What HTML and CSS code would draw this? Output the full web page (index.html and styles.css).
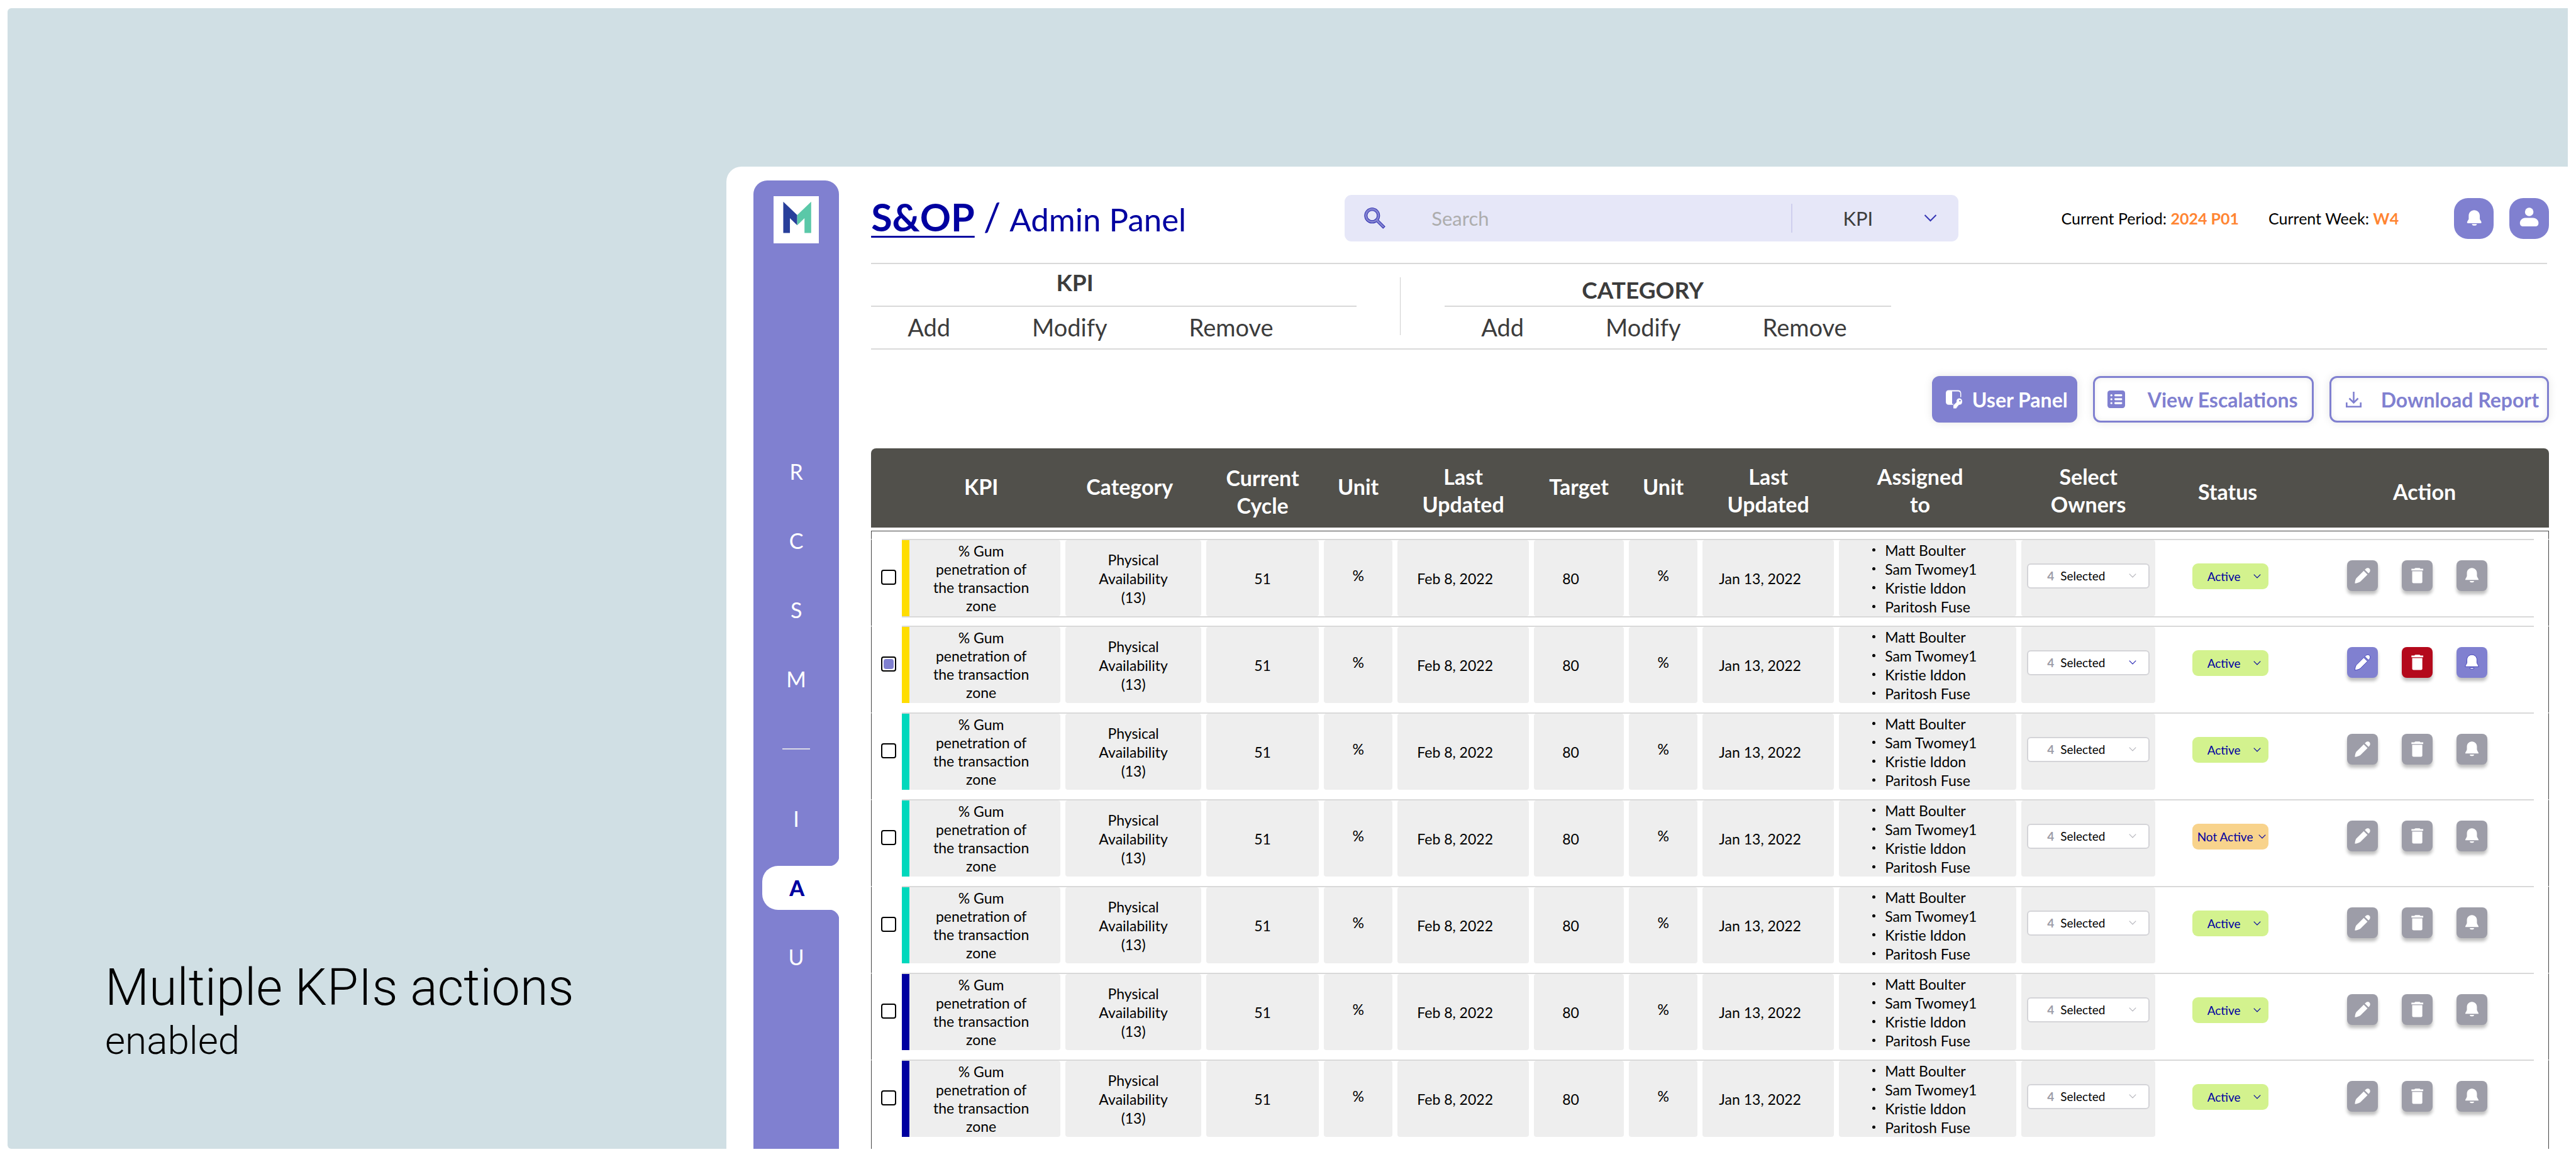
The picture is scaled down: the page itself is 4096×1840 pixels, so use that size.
FILE: index.html
```
<!DOCTYPE html>
<html lang="en">
<head>
<meta charset="utf-8">
<title>S&amp;OP Admin Panel</title>
<link rel="stylesheet" href="styles.css">
</head>
<body>
<svg class="sprite" aria-hidden="true">
  <symbol id="i-pencil" viewBox="0 0 240 240"><path d="M61 180C61 166 66 148 72 140L130 82L159 111L103 167C92 175 76 179 61 180Z"/><path d="M138 74L146 66C154 58 168 58 175 66C182 73 181 87 174 94L167 102Z"/></symbol>
  <symbol id="i-trash" viewBox="0 0 240 240"><path d="M75 66H98Q102 60 108 60H136Q142 60 145 66H167V80H75Z"/><path d="M81 86H160V168Q160 179 149 179H92Q81 179 81 168Z"/></symbol>
  <symbol id="i-bell" viewBox="0 0 240 240"><path d="M120 60C97 60 81 78 81 100V122C81 130 68 142 68 153H172C172 142 159 130 159 122V100C159 78 143 60 120 60Z"/><path d="M103 162H137Q135 173 127 173H113Q105 173 103 162Z"/></symbol>
  <symbol id="i-chevron" viewBox="0 0 20 12"><path d="M1 1L10 10L19 1" fill="none" stroke="currentColor"/></symbol>
</svg>

<div class="stage">
  <aside class="caption">
    <h1 class="caption-title">Multiple KPIs actions</h1>
    <p class="caption-sub">enabled</p>
  </aside>

  <div class="panel">
    <nav class="sidebar" aria-label="Main">
      <a class="logo" href="#home" aria-label="Home">
        <svg viewBox="0 0 354 368"><path fill="#283f9a" d="M76 43L185 148V228L128 172V288H76Z"/><path fill="#5ac8a8" d="M294 43L185 148V228L242 172V288H294Z"/></svg>
      </a>
      <ul class="nav-list">
        <li><a class="nav-link" href="#r">R</a></li>
        <li><a class="nav-link" href="#c">C</a></li>
        <li><a class="nav-link" href="#s">S</a></li>
        <li><a class="nav-link" href="#m">M</a></li>
        <li class="nav-rule" role="separator"></li>
        <li><a class="nav-link" href="#i">I</a></li>
        <li><a class="nav-link nav-link-active" href="#a" aria-current="page">A</a></li>
        <li><a class="nav-link" href="#u">U</a></li>
      </ul>
    </nav>

    <main class="content">
      <header class="topbar">
        <div class="title"><a class="title-root" href="#sop">S&amp;OP</a><span class="title-slash">/</span><span class="title-page">Admin Panel</span></div>
        <form class="search">
          <svg class="search-icon" viewBox="0 0 34 34"><g fill="none" stroke="#1a1aa8" stroke-width="5"><circle cx="12.8" cy="12.8" r="10"/><path d="M20 20L32 32"/></g><g fill="none" stroke="#8080d0" stroke-width="3.4"><circle cx="12.8" cy="12.8" r="10"/><path d="M20 20L31.4 31.4"/></g></svg>
          <input class="search-input" type="search" placeholder="Search" aria-label="Search">
          <div class="search-scope">
            <select class="scope-select" aria-label="Search in"><option>KPI</option><option>Category</option></select>
            <svg class="chevron chevron-large"><use href="#i-chevron"/></svg>
          </div>
        </form>
        <p class="period">Current Period: <strong>2024 P01</strong></p>
        <p class="period">Current Week: <strong>W4</strong></p>
        <div class="top-actions">
          <button class="round-btn" type="button" aria-label="Notifications"><svg viewBox="0 0 307 316"><path d="M157 93C133 93 114 112 114 136V163L102 183Q98 193 107 194H207Q216 193 212 183L200 163V136C200 112 181 93 157 93Z"/><path d="M139 201H177C177 209 171 213 165 213H151C145 213 139 209 139 201Z"/></svg></button>
          <button class="round-btn" type="button" aria-label="Account"><svg viewBox="0 0 307 316"><circle cx="154" cy="107" r="33"/><path d="M122 153H184C208 153 226 171 226 193C226 209 216 219 200 219H108C92 219 82 209 82 193C82 171 100 153 122 153Z"/></svg></button>
        </div>
      </header>

      <section class="subnav">
        <div class="group group-kpi">
          <h2 class="group-title">KPI</h2>
          <div class="group-links"><a href="#kpi-add">Add</a><a href="#kpi-modify">Modify</a><a href="#kpi-remove">Remove</a></div>
        </div>
        <div class="group group-category">
          <h2 class="group-title">CATEGORY</h2>
          <div class="group-links"><a href="#cat-add">Add</a><a href="#cat-modify">Modify</a><a href="#cat-remove">Remove</a></div>
        </div>
      </section>

      <div class="toolbar">
        <button class="tool-btn tool-btn-solid" type="button"><svg class="icon-user-panel" viewBox="0 0 130 146"><path d="M24 0H96Q122 0 122 26V56H115V28Q115 10 97 10H50V109H62Q58 112 57 117H24Q0 117 0 93V24Q0 0 24 0Z"/><path fill-rule="evenodd" d="M107 66C122 66 130 77 130 91C130 108 121 117 109 117L100 118V125L92 128V136L84 139V145H60V121L86 95C83 79 92 66 107 66ZM112 78A6 6 0 1 0 112 91A6 6 0 1 0 112 78Z"/></svg>User Panel</button>
        <button class="tool-btn tool-btn-view" type="button"><svg class="icon-list" viewBox="0 0 135 135"><rect width="135" height="135" rx="20"/><g fill="#fff"><circle cx="30" cy="37" r="8"/><circle cx="30" cy="67" r="8"/><circle cx="30" cy="97" r="8"/><rect x="53" y="29" width="60" height="16" rx="7"/><rect x="53" y="59" width="60" height="16" rx="7"/><rect x="53" y="89" width="60" height="16" rx="7"/></g></svg>View Escalations</button>
        <button class="tool-btn tool-btn-download" type="button"><svg class="icon-download" viewBox="0 0 25 25"><g fill="none" stroke="currentColor" stroke-width="2.6"><path d="M12.5 0V17"/><path d="M5.5 10.5L12.5 17.5L19.5 10.5"/><path d="M1.3 17V23.7H23.7V17"/></g></svg>Download Report</button>
      </div>

      <div class="table-wrap">
        <table class="kpi-table">
          <colgroup><col class="w-check"><col class="w-kpi"><col class="w-category"><col class="w-cycle"><col class="w-unit"><col class="w-date"><col class="w-target"><col class="w-unit"><col class="w-date"><col class="w-assigned"><col class="w-owners"><col class="w-status"><col class="w-action"><col class="w-end"></colgroup>
          <thead>
            <tr>
              <th class="th-first"></th><th>KPI</th><th class="th-category">Category</th><th class="th-low">Current<br>Cycle</th><th>Unit</th><th class="th-two">Last<br>Updated</th><th>Target</th><th>Unit</th><th class="th-two">Last<br>Updated</th><th class="th-two th-assigned">Assigned<br>to</th><th class="th-two">Select<br>Owners</th><th class="th-low">Status</th><th class="th-low th-last" colspan="2">Action</th>
            </tr>
          </thead>
          <tbody>
            <tr class="spacer" aria-hidden="true"><td colspan="14"></td></tr>
            <tr class="row row-ruled">
              <td class="td-check"><input class="check" type="checkbox" aria-label="Select row 1"></td>
              <td><div class="cell stripe yellow">% Gum<br>penetration of<br>the transaction<br>zone</div></td>
              <td><div class="cell category">Physical<br>Availability<br>(13)</div></td>
              <td><div class="cell">51</div></td>
              <td><div class="cell unit">%</div></td>
              <td><div class="cell shift">Feb 8, 2022</div></td>
              <td><div class="cell shift">80</div></td>
              <td><div class="cell unit">%</div></td>
              <td><div class="cell shift">Jan 13, 2022</div></td>
              <td><ul class="cell people"><li>Matt Boulter</li><li>Sam Twomey1</li><li>Kristie Iddon</li><li>Paritosh Fuse</li></ul></td>
              <td><div class="cell owners"><div class="owner-box"><span class="count">4</span><select aria-label="Owners, row 1"><option>Selected</option></select><svg class="chevron"><use href="#i-chevron"/></svg></div></div></td>
              <td class="td-plain"><div class="status"><select aria-label="Status, row 1"><option>Active</option></select><svg class="chevron"><use href="#i-chevron"/></svg></div></td>
              <td class="td-plain"><div class="actions"><button type="button" aria-label="Edit"><svg><use href="#i-pencil"/></svg></button><button type="button" aria-label="Delete"><svg><use href="#i-trash"/></svg></button><button type="button" aria-label="Notify"><svg><use href="#i-bell"/></svg></button></div></td>
              <td class="td-end"></td>
            </tr>
            <tr class="row row-selected">
              <td class="td-check"><input class="check" type="checkbox" checked aria-label="Select row 2"></td>
              <td><div class="cell stripe yellow">% Gum<br>penetration of<br>the transaction<br>zone</div></td>
              <td><div class="cell category">Physical<br>Availability<br>(13)</div></td>
              <td><div class="cell">51</div></td>
              <td><div class="cell unit">%</div></td>
              <td><div class="cell shift">Feb 8, 2022</div></td>
              <td><div class="cell shift">80</div></td>
              <td><div class="cell unit">%</div></td>
              <td><div class="cell shift">Jan 13, 2022</div></td>
              <td><ul class="cell people"><li>Matt Boulter</li><li>Sam Twomey1</li><li>Kristie Iddon</li><li>Paritosh Fuse</li></ul></td>
              <td><div class="cell owners"><div class="owner-box"><span class="count">4</span><select aria-label="Owners, row 2"><option>Selected</option></select><svg class="chevron"><use href="#i-chevron"/></svg></div></div></td>
              <td class="td-plain"><div class="status"><select aria-label="Status, row 2"><option>Active</option></select><svg class="chevron"><use href="#i-chevron"/></svg></div></td>
              <td class="td-plain"><div class="actions"><button type="button" aria-label="Edit"><svg><use href="#i-pencil"/></svg></button><button class="delete" type="button" aria-label="Delete"><svg><use href="#i-trash"/></svg></button><button type="button" aria-label="Notify"><svg><use href="#i-bell"/></svg></button></div></td>
              <td class="td-end"></td>
            </tr>
            <tr class="row">
              <td class="td-check"><input class="check" type="checkbox" aria-label="Select row 3"></td>
              <td><div class="cell stripe teal">% Gum<br>penetration of<br>the transaction<br>zone</div></td>
              <td><div class="cell category">Physical<br>Availability<br>(13)</div></td>
              <td><div class="cell">51</div></td>
              <td><div class="cell unit">%</div></td>
              <td><div class="cell shift">Feb 8, 2022</div></td>
              <td><div class="cell shift">80</div></td>
              <td><div class="cell unit">%</div></td>
              <td><div class="cell shift">Jan 13, 2022</div></td>
              <td><ul class="cell people"><li>Matt Boulter</li><li>Sam Twomey1</li><li>Kristie Iddon</li><li>Paritosh Fuse</li></ul></td>
              <td><div class="cell owners"><div class="owner-box"><span class="count">4</span><select aria-label="Owners, row 3"><option>Selected</option></select><svg class="chevron"><use href="#i-chevron"/></svg></div></div></td>
              <td class="td-plain"><div class="status"><select aria-label="Status, row 3"><option>Active</option></select><svg class="chevron"><use href="#i-chevron"/></svg></div></td>
              <td class="td-plain"><div class="actions"><button type="button" aria-label="Edit"><svg><use href="#i-pencil"/></svg></button><button type="button" aria-label="Delete"><svg><use href="#i-trash"/></svg></button><button type="button" aria-label="Notify"><svg><use href="#i-bell"/></svg></button></div></td>
              <td class="td-end"></td>
            </tr>
            <tr class="row">
              <td class="td-check"><input class="check" type="checkbox" aria-label="Select row 4"></td>
              <td><div class="cell stripe teal">% Gum<br>penetration of<br>the transaction<br>zone</div></td>
              <td><div class="cell category">Physical<br>Availability<br>(13)</div></td>
              <td><div class="cell">51</div></td>
              <td><div class="cell unit">%</div></td>
              <td><div class="cell shift">Feb 8, 2022</div></td>
              <td><div class="cell shift">80</div></td>
              <td><div class="cell unit">%</div></td>
              <td><div class="cell shift">Jan 13, 2022</div></td>
              <td><ul class="cell people"><li>Matt Boulter</li><li>Sam Twomey1</li><li>Kristie Iddon</li><li>Paritosh Fuse</li></ul></td>
              <td><div class="cell owners"><div class="owner-box"><span class="count">4</span><select aria-label="Owners, row 4"><option>Selected</option></select><svg class="chevron"><use href="#i-chevron"/></svg></div></div></td>
              <td class="td-plain"><div class="status status-off"><select aria-label="Status, row 4"><option>Not Active</option></select><svg class="chevron"><use href="#i-chevron"/></svg></div></td>
              <td class="td-plain"><div class="actions"><button type="button" aria-label="Edit"><svg><use href="#i-pencil"/></svg></button><button type="button" aria-label="Delete"><svg><use href="#i-trash"/></svg></button><button type="button" aria-label="Notify"><svg><use href="#i-bell"/></svg></button></div></td>
              <td class="td-end"></td>
            </tr>
            <tr class="row">
              <td class="td-check"><input class="check" type="checkbox" aria-label="Select row 5"></td>
              <td><div class="cell stripe teal">% Gum<br>penetration of<br>the transaction<br>zone</div></td>
              <td><div class="cell category">Physical<br>Availability<br>(13)</div></td>
              <td><div class="cell">51</div></td>
              <td><div class="cell unit">%</div></td>
              <td><div class="cell shift">Feb 8, 2022</div></td>
              <td><div class="cell shift">80</div></td>
              <td><div class="cell unit">%</div></td>
              <td><div class="cell shift">Jan 13, 2022</div></td>
              <td><ul class="cell people"><li>Matt Boulter</li><li>Sam Twomey1</li><li>Kristie Iddon</li><li>Paritosh Fuse</li></ul></td>
              <td><div class="cell owners"><div class="owner-box"><span class="count">4</span><select aria-label="Owners, row 5"><option>Selected</option></select><svg class="chevron"><use href="#i-chevron"/></svg></div></div></td>
              <td class="td-plain"><div class="status"><select aria-label="Status, row 5"><option>Active</option></select><svg class="chevron"><use href="#i-chevron"/></svg></div></td>
              <td class="td-plain"><div class="actions"><button type="button" aria-label="Edit"><svg><use href="#i-pencil"/></svg></button><button type="button" aria-label="Delete"><svg><use href="#i-trash"/></svg></button><button type="button" aria-label="Notify"><svg><use href="#i-bell"/></svg></button></div></td>
              <td class="td-end"></td>
            </tr>
            <tr class="row">
              <td class="td-check"><input class="check" type="checkbox" aria-label="Select row 6"></td>
              <td><div class="cell stripe navy">% Gum<br>penetration of<br>the transaction<br>zone</div></td>
              <td><div class="cell category">Physical<br>Availability<br>(13)</div></td>
              <td><div class="cell">51</div></td>
              <td><div class="cell unit">%</div></td>
              <td><div class="cell shift">Feb 8, 2022</div></td>
              <td><div class="cell shift">80</div></td>
              <td><div class="cell unit">%</div></td>
              <td><div class="cell shift">Jan 13, 2022</div></td>
              <td><ul class="cell people"><li>Matt Boulter</li><li>Sam Twomey1</li><li>Kristie Iddon</li><li>Paritosh Fuse</li></ul></td>
              <td><div class="cell owners"><div class="owner-box"><span class="count">4</span><select aria-label="Owners, row 6"><option>Selected</option></select><svg class="chevron"><use href="#i-chevron"/></svg></div></div></td>
              <td class="td-plain"><div class="status"><select aria-label="Status, row 6"><option>Active</option></select><svg class="chevron"><use href="#i-chevron"/></svg></div></td>
              <td class="td-plain"><div class="actions"><button type="button" aria-label="Edit"><svg><use href="#i-pencil"/></svg></button><button type="button" aria-label="Delete"><svg><use href="#i-trash"/></svg></button><button type="button" aria-label="Notify"><svg><use href="#i-bell"/></svg></button></div></td>
              <td class="td-end"></td>
            </tr>
            <tr class="row">
              <td class="td-check"><input class="check" type="checkbox" aria-label="Select row 7"></td>
              <td><div class="cell stripe navy">% Gum<br>penetration of<br>the transaction<br>zone</div></td>
              <td><div class="cell category">Physical<br>Availability<br>(13)</div></td>
              <td><div class="cell">51</div></td>
              <td><div class="cell unit">%</div></td>
              <td><div class="cell shift">Feb 8, 2022</div></td>
              <td><div class="cell shift">80</div></td>
              <td><div class="cell unit">%</div></td>
              <td><div class="cell shift">Jan 13, 2022</div></td>
              <td><ul class="cell people"><li>Matt Boulter</li><li>Sam Twomey1</li><li>Kristie Iddon</li><li>Paritosh Fuse</li></ul></td>
              <td><div class="cell owners"><div class="owner-box"><span class="count">4</span><select aria-label="Owners, row 7"><option>Selected</option></select><svg class="chevron"><use href="#i-chevron"/></svg></div></div></td>
              <td class="td-plain"><div class="status"><select aria-label="Status, row 7"><option>Active</option></select><svg class="chevron"><use href="#i-chevron"/></svg></div></td>
              <td class="td-plain"><div class="actions"><button type="button" aria-label="Edit"><svg><use href="#i-pencil"/></svg></button><button type="button" aria-label="Delete"><svg><use href="#i-trash"/></svg></button><button type="button" aria-label="Notify"><svg><use href="#i-bell"/></svg></button></div></td>
              <td class="td-end"></td>
            </tr>
          </tbody>
        </table>
      </div>
    </main>
  </div>
</div>
</body>
</html>
```
FILE: styles.css
```
:root {
  --violet: #8080d0;
  --navy: #0000a0;
  --grey: #9d9da8;
  --rule: #d9d9d9;
  --ink: #3c3c3c;
}

* { box-sizing: border-box; }

body {
  margin: 0;
  padding: 13px 13px 13px 12px;
  min-height: 100vh;
  display: flex;
  background: #fff;
  font-family: Lato, "Open Sans", sans-serif;
  color: #000;
}

h1, h2, p, ul { margin: 0; padding: 0; }
ul { list-style: none; }
a { color: inherit; text-decoration: none; }
svg { display: block; fill: currentColor; }
button, input, select { font: inherit; color: inherit; }
button { cursor: pointer; border: 0; padding: 0; }
select { appearance: none; border: 0; padding: 0; margin: 0; background: none; outline: none; }
.sprite { position: absolute; width: 0; height: 0; }

.stage {
  flex: 1;
  display: flex;
  background: #d0dfe4;
  border-radius: 6px 0 0 6px;
}

/* Caption */
.caption {
  flex: 0 0 28.08%;
  display: flex;
  flex-direction: column;
  justify-content: flex-end;
  padding: 0 0 136px 155px;
  font-family: Roboto, sans-serif;
  font-weight: 300;
}
.caption-title { font-size: 81px; line-height: 96px; font-weight: 300; white-space: nowrap; }
.caption-sub { font-size: 62px; line-height: 72px; }

/* Panel */
.panel {
  flex: 1;
  display: flex;
  gap: 51px;
  margin-top: 252px;
  padding: 22px 30px 0 43px;
  background: #fff;
  border-radius: 24px 0 0 0;
}

/* Sidebar */
.sidebar {
  flex: 0 0 136px;
  padding-top: 25px;
  background: var(--violet);
  border-radius: 22px 22px 0 0;
  color: #fff;
}
.logo { display: block; width: 72px; margin: 0 auto; background: #fff; }
.nav-list {
  display: flex;
  flex-direction: column;
  gap: 40px;
  margin-top: 328px;
}
.nav-link {
  display: block;
  font-size: 34px;
  line-height: 70px;
  text-align: center;
}
.nav-rule { height: 72px; display: flex; align-items: center; justify-content: center; }
.nav-rule::before { content: ""; width: 44px; height: 2px; background: #d9d9e6; }
.nav-link-active {
  position: relative;
  margin-left: 14px;
  padding-right: 12px;
  background: #fff;
  border-radius: 25px 0 0 25px;
  color: var(--navy);
  font-weight: 900;
}
/* Concave corners where the tab meets the sidebar edge */
.nav-link-active::before,
.nav-link-active::after {
  content: "";
  position: absolute;
  right: 0;
  width: 16px;
  height: 16px;
}
.nav-link-active::before { bottom: 100%; background: radial-gradient(circle at 0 0, transparent 16px, #fff 17px); }
.nav-link-active::after { top: 100%; background: radial-gradient(circle at 0 100%, transparent 16px, #fff 17px); }

.content {
  flex: 1;
  min-width: 0;
  display: flex;
  flex-direction: column;
  padding-top: 23px;
}

/* Top bar */
.topbar {
  display: flex;
  align-items: center;
  height: 110px;
  padding-bottom: 34px;
  margin-right: 3px;
  border-bottom: 2px solid var(--rule);
}
.title {
  flex: 0 0 28.26%;
  display: flex;
  align-items: baseline;
  line-height: 70px;
  color: var(--navy);
  white-space: nowrap;
}
.title-root { font-size: 61px; font-weight: 700; text-decoration: underline; text-decoration-thickness: 3px; text-underline-offset: 7px; }
.title-slash { font-size: 61px; margin: 0 14px; }
.title-page { font-size: 51px; }

.search {
  flex: 0 0 36.63%;
  display: flex;
  align-items: center;
  height: 74px;
  padding-left: 31px;
  border-radius: 11px;
  background: #e6e7f8;
}
.search-icon { flex: none; width: 34px; height: 34px; }
.search-input {
  flex: 1;
  min-width: 0;
  margin-left: 73px;
  padding: 0;
  border: 0;
  outline: none;
  background: none;
  font-size: 31px;
}
.search-input::placeholder { color: #adadad; opacity: 1; }
.search-scope {
  display: flex;
  align-items: center;
  width: 266px;
  height: 46px;
  padding: 0 34px 0 80px;
  border-left: 2px solid #cfcfee;
}
.scope-select { flex: 1; min-width: 0; font-size: 31px; color: var(--ink); }

.chevron { flex: none; width: 12px; height: 7px; stroke-width: 2; }
.chevron-large { width: 21px; height: 12px; color: #3434b4; stroke-width: 2; }

.period { font-size: 25px; line-height: 32px; margin-left: 47px; white-space: nowrap; }
.period:nth-of-type(1) { margin-left: auto; }
.period strong { color: #ff8533; font-weight: 700; }

.top-actions { display: flex; gap: 25px; margin-left: 88px; margin-right: -3px; }
.round-btn { width: 63px; height: 65px; border-radius: 22px; background: var(--violet); color: #fff; }
.round-btn svg { width: 100%; height: 100%; }

/* KPI / Category menus */
.subnav {
  display: flex;
  height: 136px;
  margin-right: 3px;
  border-bottom: 2px solid var(--rule);
  color: var(--ink);
}
.group-kpi {
  flex: 0 0 772px;
  margin-right: 69px;
}
.group-category { flex: 0 0 710px; position: relative; margin-left: 71px; }
.group-category::before {
  content: "";
  position: absolute;
  left: -71px;
  top: 21px;
  width: 1px;
  height: 92px;
  background: #cfcfcf;
}
.group-title {
  height: 68px;
  padding: 4px 124px 12px 0;
  border-bottom: 2px solid var(--rule);
  font-size: 37px;
  line-height: 50px;
  font-weight: 700;
  text-align: center;
}
.group-category .group-title { padding: 16px 80px 0 0; }
.group-links { display: flex; gap: 130px; padding-left: 58px; font-size: 38px; line-height: 64px; }

/* Toolbar */
.toolbar { display: flex; justify-content: flex-end; gap: 25px; padding: 42px 0 41px; }
.tool-btn {
  display: flex;
  align-items: center;
  height: 74px;
  border: 3px solid var(--violet);
  border-radius: 12px;
  background: #fff;
  color: var(--violet);
  font-size: 32px;
  font-weight: 700;
  white-space: nowrap;
  box-shadow: 0 0 14px rgba(0, 0, 0, .1), inset 0 0 10px rgba(0, 0, 0, .08);
}
.tool-btn-solid { gap: 16px; padding: 0 12px 0 19px; background: var(--violet); color: #fff; box-shadow: 0 0 14px rgba(0, 0, 0, .1); }
.tool-btn-view { gap: 36px; padding: 0 22px 0 20px; }
.tool-btn-download { gap: 31px; padding: 0 13px 0 23px; }
.icon-user-panel { width: 26px; height: 30px; }
.icon-list { width: 28px; height: 28px; }
.icon-download { width: 25px; height: 25px; }

/* Table */
.table-wrap { flex: 1; display: flex; flex-direction: column; }
.table-wrap::after {
  content: "";
  flex: 1;
  border: solid #444;
  border-width: 0 1px;
}
.kpi-table { width: 100%; table-layout: fixed; border-collapse: separate; border-spacing: 0; }
.w-check { width: 49px; }
.w-kpi { width: 260px; }
.w-category { width: 224px; }
.w-cycle { width: 187px; }
.w-unit { width: 117px; }
.w-date { width: 217px; }
.w-target { width: 151px; }
.w-assigned { width: 290px; }
.w-owners { width: 221px; }
.w-status { width: 222px; }
.w-action { width: 372px; }
.w-end { width: 24px; }

th {
  height: 131px;
  padding: 0 8px 4px 0;
  border-bottom: 5px solid #fff;
  background: #51504b;
  color: #fff;
  font-size: 34px;
  line-height: 44px;
  font-weight: 700;
  vertical-align: middle;
}
.th-first { border-top-left-radius: 8px; }
.th-last { border-top-right-radius: 8px; padding-right: 0; }
.th-category { padding-right: 20px; }
.th-two { padding-top: 12px; }
.th-low { padding-top: 16px; }
.th-assigned { padding-right: 32px; }

td { padding: 0; vertical-align: top; }
.spacer td { height: 13px; border: solid #444; border-width: 1px 1px 0; }
.row td { height: 138px; border-top: 2px solid var(--rule); }
.row .td-check { border-top-color: transparent; border-left: 1px solid #444; padding: 47px 0 0 15px; }
.row .td-end { border-top-color: transparent; border-right: 1px solid #444; }
.row-ruled td:not(.td-check, .td-end) {
  background: linear-gradient(var(--rule) 0 0) 0 121px / 100% 2px no-repeat;
}

.cell {
  display: flex;
  align-items: center;
  justify-content: center;
  height: 121px;
  margin-right: 8px;
  border-radius: 4px;
  background: #eee;
  font-size: 23px;
  line-height: 30px;
  text-align: center;
}
.stripe { border-left: 12px solid; border-radius: 0 4px 4px 0; padding-right: 12px; line-height: 29px; }
.yellow { border-left-color: #ffdd00; }
.teal { border-left-color: #00d8bc; }
.navy { border-left-color: var(--navy); }
.unit { padding-bottom: 10px; }
.shift { padding-right: 26px; }
.people {
  flex-direction: column;
  align-items: flex-start;
  padding-left: 53px;
}
.people li { display: flex; align-items: center; gap: 15px; }
.people li::before { content: ""; width: 5px; height: 5px; border-radius: 50%; background: #000; }

.check {
  appearance: none;
  display: block;
  width: 24px;
  height: 24px;
  margin: 0;
  border: 2px solid #000;
  border-radius: 4px;
  background: #fff;
}
.check:checked::before {
  content: "";
  display: block;
  width: 16px;
  height: 16px;
  margin: 2px;
  border-radius: 4px;
  background: var(--violet);
}

.owners { padding-bottom: 8px; }
.owner-box {
  display: flex;
  align-items: center;
  width: 195px;
  height: 40px;
  padding: 0 19px 0 30px;
  border: 2px solid #d4d4d8;
  border-radius: 6px;
  background: #fff;
  font-size: 19px;
  color: #000;
}
.owner-box .count { width: 21px; text-align: left; font-weight: 700; color: var(--grey); }
.owner-box select { flex: 1; min-width: 0; }
.owner-box .chevron { color: #b5b5bc; }
.row-selected .owner-box .chevron { color: #2a2ab4; }

.status {
  display: flex;
  align-items: center;
  width: 121px;
  height: 41px;
  margin: 37px auto 0;
  padding: 0 12px 0 24px;
  border-radius: 9px;
  background: #d3f28e;
  color: var(--navy);
  font-size: 19px;
}
.status select { flex: 1; min-width: 0; }
.status-off { padding: 0 4px 0 8px; background: #f8d38c; }

.actions { display: flex; justify-content: center; gap: 38px; padding-top: 32px; }
.actions button {
  width: 49px;
  height: 49px;
  border-radius: 8px;
  background: var(--grey);
  color: #fff;
  box-shadow: 0 5px 5px rgba(0, 0, 0, .25);
}
.actions svg { width: 49px; height: 49px; }
.row-selected .actions button { background: var(--violet); stroke: #3030b4; stroke-width: 4px; }
.row-selected .actions .delete { background: #b4091c; stroke: none; }
```
